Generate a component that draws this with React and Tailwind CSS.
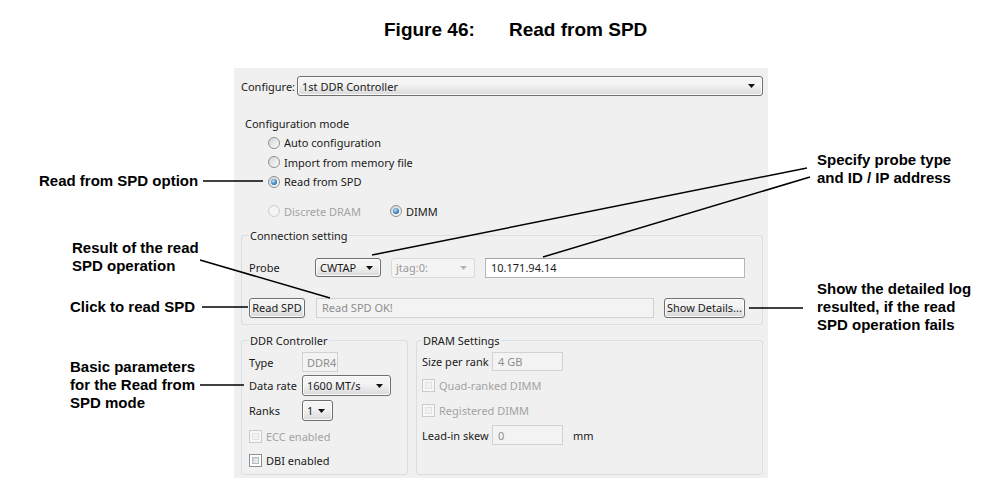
import clsx from 'clsx';

// Win7-artige Bedienelemente, nur als Bild (keine Logik)
function Arrow({ disabled }) {
  return (
    <svg width="7" height="4" viewBox="0 0 7 4" className="shrink-0">
      <path d="M0 0h7L3.5 4z" fill={disabled ? '#b4b4b4' : '#111'} />
    </svg>
  );
}

function Combo({ text, disabled, className }) {
  return (
    <div
      className={clsx(
        'flex items-center justify-between rounded-[3px] border pl-[4px] pr-[7px]',
        disabled
          ? 'border-[#d9d9d9] bg-[#f4f4f4] text-[#9a9a9a]'
          : 'border-[#707070] bg-linear-to-b from-[#f4f4f4] from-40% to-[#d9d9d9] shadow-[inset_0_0_0_1px_#fbfbfb]',
        className
      )}
    >
      <span>{text}</span>
      <Arrow disabled={disabled} />
    </div>
  );
}

function Button({ children, className }) {
  return (
    <div
      className={clsx(
        'flex items-center justify-center rounded-[3px] border border-[#707070] bg-linear-to-b from-[#f4f4f4] from-40% to-[#d6d6d6] shadow-[inset_0_0_0_1px_#fbfbfb]',
        className
      )}
    >
      {children}
    </div>
  );
}

function Field({ children, disabled, className }) {
  return (
    <div
      className={clsx(
        'flex items-center border pl-[5px]',
        disabled ? 'border-[#d2d2d2] bg-[#f3f3f3] text-[#8d8d8d]' : 'border-[#b4b7bd] border-t-[#a0a3a8] bg-white',
        className
      )}
    >
      {children}
    </div>
  );
}

function Radio({ checked, disabled }) {
  return (
    <span
      className={clsx(
        'flex h-[12px] w-[12px] shrink-0 items-center justify-center rounded-full border',
        disabled
          ? 'border-[#cdcdcd] bg-[#f4f4f4]'
          : 'border-[#8e8f8f] bg-linear-to-br from-[#d3d3d3] to-[#fdfdfd]'
      )}
    >
      {checked && (
        <span className="h-[6px] w-[6px] rounded-full bg-[radial-gradient(circle_at_40%_35%,#b9e2fb,#2f74b3_65%,#1d4f80)]" />
      )}
    </span>
  );
}

function Check({ disabled }) {
  return (
    <span
      className={clsx(
        'flex h-[13px] w-[13px] shrink-0 border p-[2px]',
        disabled ? 'border-[#cbcbcb] bg-[#f7f7f7]' : 'border-[#8e8f8f] bg-white'
      )}
    >
      <span
        className={clsx(
          'flex-1 border',
          disabled ? 'border-[#e2e2e2] bg-[#f1f1f1]' : 'border-[#b5b9bf] bg-linear-to-br from-[#cfd2d6] to-[#f6f6f6]'
        )}
      />
    </span>
  );
}

function RadioRow({ label, checked }) {
  return (
    <div className="flex h-[19.5px] items-center gap-[4px] pl-[27px]">
      <Radio checked={checked} />
      <span>{label}</span>
    </div>
  );
}

function Panel() {
  return (
    <div className="h-[410px] w-[534px] shrink-0 bg-[#f0f0f0] pl-[7px] pr-[5px] pt-[8px] font-['Noto_Sans',sans-serif] text-[11px] leading-[15px] text-[#1a1a1a]">
      <div className="flex h-[20px] items-center">
        <span className="w-[56px]">Configure:</span>
        <Combo className="h-[20px] w-[466px]" text="1st DDR Controller" />
      </div>

      <div className="mt-[17.5px] flex h-[19.5px] items-center pl-[4px]">Configuration mode</div>
      <RadioRow label="Auto configuration" />
      <RadioRow label="Import from memory file" />
      <RadioRow label="Read from SPD" checked />

      <div className="mt-[9.5px] flex h-[20px] items-center pl-[27px]">
        <div className="flex w-[122px] items-center gap-[4px] text-[#a3a3a3]">
          <Radio disabled />
          <span>Discrete DRAM</span>
        </div>
        <div className="flex items-center gap-[4px]">
          <Radio checked />
          <span>DIMM</span>
        </div>
      </div>

      <fieldset className="mt-[6.5px] rounded-[3px] border border-[#d5dfe5] pb-[6.5px] pl-[7px]">
        <legend className="px-[1px] leading-[15px]">Connection setting</legend>
        <div className="mt-[15px] flex h-[20px] items-center">
          <span className="w-[66px]">Probe</span>
          <Combo className="h-[19px] w-[66px]" text="CWTAP" />
          <Combo className="ml-[10px] h-[20px] w-[84px]" text="jtag:0:" disabled />
          <Field className="ml-[10px] h-[20px] w-[260px]">10.171.94.14</Field>
        </div>
        <div className="mt-[20px] flex h-[20px] items-center">
          <Button className="h-[20px] w-[56px]">Read SPD</Button>
          <Field disabled className="ml-[11px] h-[20px] w-[338px]">
            Read SPD OK!
          </Field>
          <Button className="ml-[10px] h-[20px] w-[81px]">Show Details...</Button>
        </div>
      </fieldset>

      <div className="mt-[7.5px] flex gap-[8px]">
        <fieldset className="w-[167px] rounded-[3px] border border-[#d5dfe5] pb-[4px] pl-[7px]">
          <legend className="px-[1px] leading-[15px]">DDR Controller</legend>
          <div className="mt-[4.5px] flex h-[20px] items-center">
            <span className="w-[53px]">Type</span>
            <Field disabled className="h-[20px] w-[36px] !pl-[4px]">
              DDR4
            </Field>
          </div>
          <div className="mt-[3px] flex h-[21px] items-center">
            <span className="w-[53px]">Data rate</span>
            <Combo className="h-[21px] w-[89px]" text="1600 MT/s" />
          </div>
          <div className="mt-[4px] flex h-[21px] items-center">
            <span className="w-[53px]">Ranks</span>
            <Combo className="h-[21px] w-[31px]" text="1" />
          </div>
          <div className="mt-[5px] flex h-[20px] items-center gap-[4px] text-[#a3a3a3]">
            <Check disabled />
            <span>ECC enabled</span>
          </div>
          <div className="mt-[4px] flex h-[20px] items-center gap-[4px]">
            <Check />
            <span>DBI enabled</span>
          </div>
        </fieldset>

        <fieldset className="flex-1 rounded-[3px] border border-[#d5dfe5] pl-[5px]">
          <legend className="px-[1px] leading-[15px]">DRAM Settings</legend>
          <div className="mt-[3.5px] flex h-[20px] items-center">
            <span className="w-[70px]">Size per rank</span>
            <Field disabled className="h-[19px] w-[71px]">
              4 GB
            </Field>
          </div>
          <div className="mt-[4px] flex h-[20px] items-center gap-[4px] text-[#a3a3a3]">
            <Check disabled />
            <span>Quad-ranked DIMM</span>
          </div>
          <div className="mt-[5px] flex h-[20px] items-center gap-[4px] text-[#a3a3a3]">
            <Check disabled />
            <span>Registered DIMM</span>
          </div>
          <div className="mt-[5px] flex h-[20px] items-center">
            <span className="w-[70px]">Lead-in skew</span>
            <Field disabled className="h-[20px] w-[71px]">
              0
            </Field>
            <span className="ml-[10px]">mm</span>
          </div>
        </fieldset>
      </div>
    </div>
  );
}

export default function App() {
  return (
    <div className="relative h-[488px] w-[985px] overflow-hidden bg-white font-['Liberation_Sans',Arial,sans-serif] text-black">
      <div className="flex pl-[384px] pt-[20px] text-[19px] font-bold leading-[19px]">
        <span className="w-[125px]">Figure 46:</span>
        <span>Read from SPD</span>
      </div>

      <div className="mt-[29px] flex">
        {/* Beschriftungen links */}
        <div className="w-[234px] shrink-0 text-[15px] font-bold leading-[18px]">
          <div className="mt-[103.5px] pl-[39px]">Read from SPD option</div>
          <div className="mt-[49.5px] pl-[72px]">
            Result of the read
            <br />
            SPD operation
          </div>
          <div className="mt-[23px] pl-[70px]">Click to read SPD</div>
          <div className="mt-[42px] pl-[70px]">
            Basic parameters
            <br />
            for the Read from
            <br />
            SPD mode
          </div>
        </div>

        <Panel />

        {/* Beschriftungen rechts */}
        <div className="pl-[49px] text-[15px] font-bold leading-[18px]">
          <div className="mt-[83px]">
            Specify probe type
            <br />
            and ID / IP address
          </div>
          <div className="mt-[93px]">
            Show the detailed log
            <br />
            resulted, if the read
            <br />
            SPD operation fails
          </div>
        </div>
      </div>

      {/* Hinweislinien über dem Screenshot */}
      <svg className="pointer-events-none absolute inset-0" width="985" height="488" viewBox="0 0 985 488">
        <g stroke="#000" strokeWidth="1.5" fill="none">
          <path d="M203 181H263" />
          <path d="M200 260L330 298" />
          <path d="M202 307H248" />
          <path d="M200 385H244" />
          <path d="M807 168L372 255" />
          <path d="M810 177L543 257" />
          <path d="M749 308H803" />
        </g>
      </svg>
    </div>
  );
}
